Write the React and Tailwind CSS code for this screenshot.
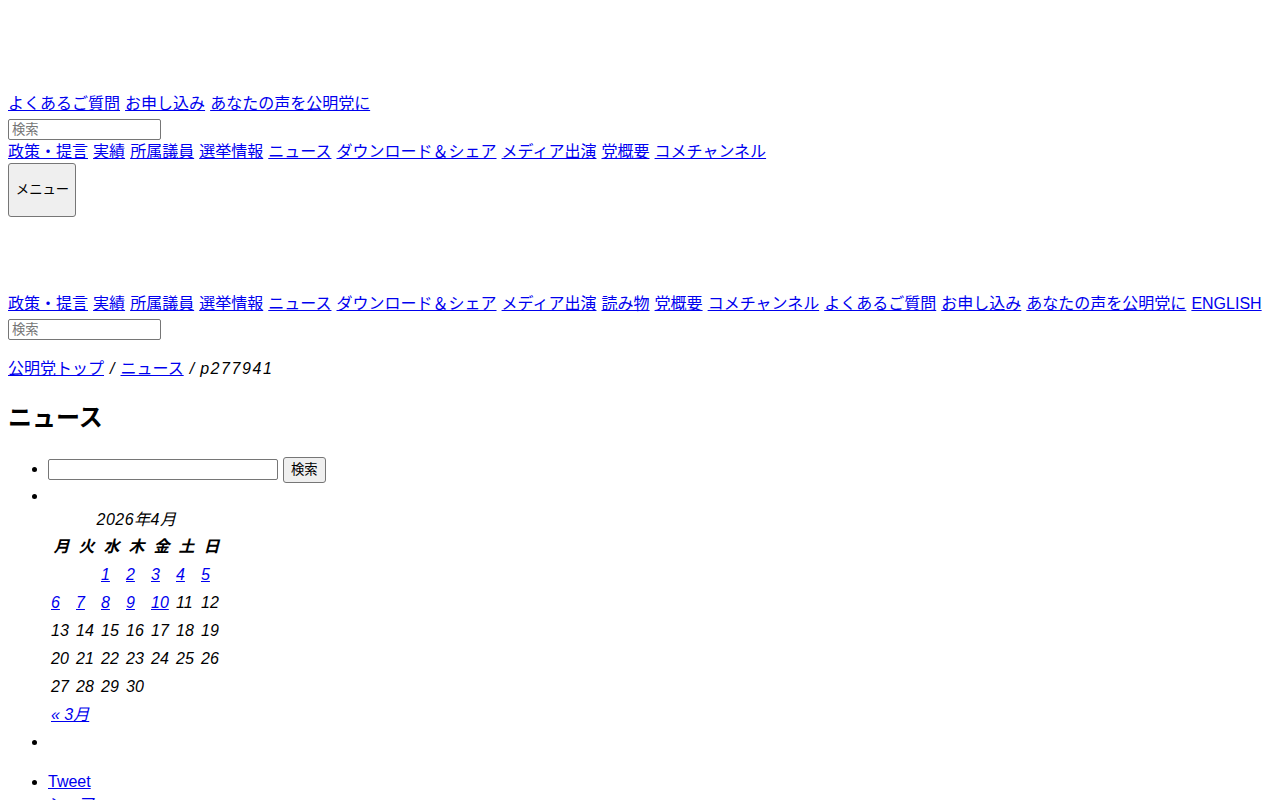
import React from 'react';

const font = { fontFamily: '"Liberation Sans", "Noto Sans CJK JP", sans-serif' };

const subLinks = ['よくあるご質問', 'お申し込み', 'あなたの声を公明党に'];
const mainLinks = ['政策・提言', '実績', '所属議員', '選挙情報', 'ニュース', 'ダウンロード＆シェア', 'メディア出演', '党概要', 'コメチャンネル'];
const globalLinks = ['政策・提言', '実績', '所属議員', '選挙情報', 'ニュース', 'ダウンロード＆シェア', 'メディア出演', '読み物', '党概要', 'コメチャンネル', 'よくあるご質問', 'お申し込み', 'あなたの声を公明党に', 'ENGLISH'];

// weeks of April 2026, null = blank cell, linked days have posts
const weeks = [
  [null, null, 1, 2, 3, 4, 5],
  [6, 7, 8, 9, 10, 11, 12],
  [13, 14, 15, 16, 17, 18, 19],
  [20, 21, 22, 23, 24, 25, 26],
  [27, 28, 29, 30, null, null, null],
];
const linkedDays = [1, 2, 3, 4, 5, 6, 7, 8, 9, 10];

function Link({ children }) {
  return <a href="#" className="text-[#0000ee] underline">{children}</a>;
}

function LinkLine({ items }) {
  return (
    <div className="h-[23px] leading-[23px] whitespace-nowrap [word-spacing:0.6px]">
      {items.map((t, i) => (
        <React.Fragment key={t + i}>
          {i > 0 && ' '}
          <Link>{t}</Link>
        </React.Fragment>
      ))}
    </div>
  );
}

function SearchBox() {
  return (
    <div className="h-[25px] pt-[4px]">
      <input
        type="text"
        placeholder="検索"
        className="block w-[153px] h-[21px] border border-[#767676] rounded-[2px] px-[3px] text-[13.33px] leading-[17px] placeholder:text-[#757575] bg-white"
      />
    </div>
  );
}

function Calendar() {
  return (
    <table className="italic border-separate border-spacing-[2px] leading-[24px]">
      <caption className="leading-[24px] tracking-[0.5px]">2026年4月</caption>
      <thead>
        <tr>
          {['月', '火', '水', '木', '金', '土', '日'].map((d) => (
            <th key={d} className="p-px w-[23px] font-bold text-center">{d}</th>
          ))}
        </tr>
      </thead>
      <tbody>
        {weeks.map((w, i) => (
          <tr key={i}>
            {w.map((d, j) => (
              <td key={j} className="p-px text-left">
                {d && (linkedDays.includes(d) ? <Link>{d}</Link> : d)}
              </td>
            ))}
          </tr>
        ))}
      </tbody>
      <tfoot>
        <tr>
          <td colSpan={3} className="p-px text-left">
            <Link>« 3月</Link>
          </td>
          <td className="p-px" />
          <td colSpan={3} className="p-px" />
        </tr>
      </tfoot>
    </table>
  );
}

export default function App() {
  return (
    <div className="bg-white text-black text-[16px] px-2 min-h-[800px]" style={font}>
      {/* header: logo area left blank */}
      <div className="h-[92px]" />
      <LinkLine items={subLinks} />
      <SearchBox />
      <LinkLine items={mainLinks} />
      <button className="block w-[68px] h-[54px] bg-[#efefef] border border-[#767676] rounded-[3px] text-[13.33px] pl-px">
        メニュー
      </button>

      <div className="h-[75px]" />
      <LinkLine items={globalLinks} />
      <SearchBox />

      {/* breadcrumb */}
      <p className="mt-[17px] mb-4 h-[23px] leading-[23px]">
        <Link>公明党トップ</Link>
        <i className="mx-[6px]">/</i>
        <Link>ニュース</Link>
        <i className="mx-[6px]">/</i>
        <i className="tracking-[1.6px]">p277941</i>
      </p>

      <h2 className="text-[24px] font-bold leading-[35px] mt-[20px] mb-[20px]">ニュース</h2>

      <ul className="list-disc pl-10">
        <li>
          <div className="flex items-center h-[29px] gap-[5px]">
            <input type="text" className="w-[230px] h-[21px] border border-[#767676] rounded-[2px] px-[3px] text-[13.33px] bg-white" />
            <button className="h-[26px] px-[7px] bg-[#efefef] border border-[#767676] rounded-[3px] text-[13.33px]">検索</button>
          </div>
        </li>
        <li className="leading-[24px]">
          {'\u200B'}
          <Calendar />
        </li>
        <li className="h-[23px]" />
      </ul>

      <ul className="list-disc pl-10 mt-[17px] leading-[23px]">
        <li><Link>Tweet</Link></li>
        <li><Link>シェア</Link></li>
      </ul>
    </div>
  );
}
